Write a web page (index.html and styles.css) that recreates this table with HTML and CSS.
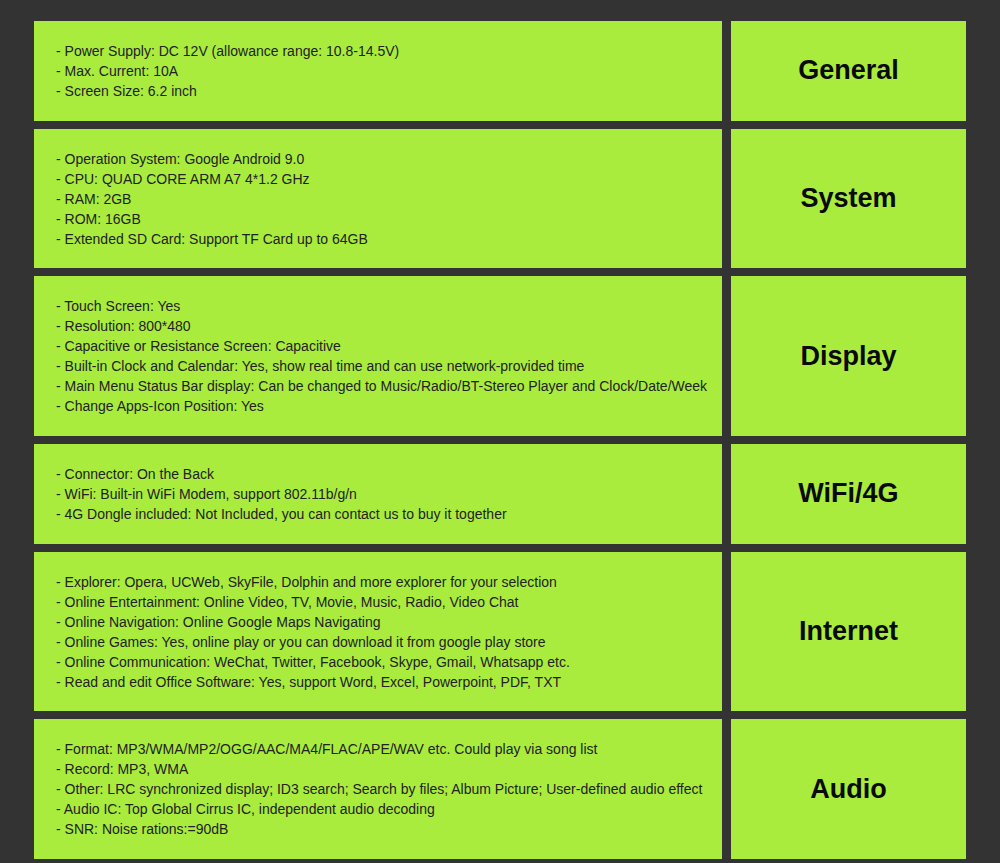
FILE: index.html
```html
<!DOCTYPE html>
<html>
<head>
<meta charset="utf-8">
<link rel="stylesheet" href="styles.css">
</head>
<body>
<div class="specs">
  <div class="cell desc">
    <p>- Power Supply: DC 12V (allowance range: 10.8-14.5V)</p>
    <p>- Max. Current: 10A</p>
    <p>- Screen Size: 6.2 inch</p>
  </div>
  <div class="cell title">General</div>

  <div class="cell desc">
    <p>- Operation System: Google Android 9.0</p>
    <p>- CPU: QUAD CORE ARM A7 4*1.2 GHz</p>
    <p>- RAM: 2GB</p>
    <p>- ROM: 16GB</p>
    <p>- Extended SD Card: Support TF Card up to 64GB</p>
  </div>
  <div class="cell title">System</div>

  <div class="cell desc">
    <p>- Touch Screen: Yes</p>
    <p>- Resolution: 800*480</p>
    <p>- Capacitive or Resistance Screen: Capacitive</p>
    <p>- Built-in Clock and Calendar: Yes, show real time and can use network-provided time</p>
    <p>- Main Menu Status Bar display: Can be changed to Music/Radio/BT-Stereo Player and Clock/Date/Week</p>
    <p>- Change Apps-Icon Position: Yes</p>
  </div>
  <div class="cell title">Display</div>

  <div class="cell desc">
    <p>- Connector: On the Back</p>
    <p>- WiFi: Built-in WiFi Modem, support 802.11b/g/n</p>
    <p>- 4G Dongle included: Not Included, you can contact us to buy it together</p>
  </div>
  <div class="cell title">WiFi/4G</div>

  <div class="cell desc">
    <p>- Explorer: Opera, UCWeb, SkyFile, Dolphin and more explorer for your selection</p>
    <p>- Online Entertainment: Online Video, TV, Movie, Music, Radio, Video Chat</p>
    <p>- Online Navigation: Online Google Maps Navigating</p>
    <p>- Online Games: Yes, online play or you can download it from google play store</p>
    <p>- Online Communication: WeChat, Twitter, Facebook, Skype, Gmail, Whatsapp etc.</p>
    <p>- Read and edit Office Software: Yes, support Word, Excel, Powerpoint, PDF, TXT</p>
  </div>
  <div class="cell title">Internet</div>

  <div class="cell desc">
    <p>- Format: MP3/WMA/MP2/OGG/AAC/MA4/FLAC/APE/WAV etc. Could play via song list</p>
    <p>- Record: MP3, WMA</p>
    <p>- Other: LRC synchronized display; ID3 search; Search by files; Album Picture; User-defined audio effect</p>
    <p>- Audio IC: Top Global Cirrus IC, independent audio decoding</p>
    <p>- SNR: Noise rations:=90dB</p>
  </div>
  <div class="cell title">Audio</div>
</div>
</body>
</html>
```

FILE: styles.css
```css
html, body {
  margin: 0;
  padding: 0;
  background: #333333;
}

body {
  font-family: "Liberation Sans", Arial, sans-serif;
}

.specs {
  display: grid;
  grid-template-columns: 688px 235px;
  column-gap: 9px;
  row-gap: 8px;
  padding: 21px 34px 4px 34px;
}

.cell {
  background: #a9ec3d;
}

.desc {
  padding: 20px 10px 19.67px 22px;
  font-size: 14px;
  line-height: 20px;
  color: #222222;
}

.desc p {
  margin: 0;
  white-space: nowrap;
}

.title {
  display: flex;
  align-items: center;
  justify-content: center;
  font-size: 27px;
  font-weight: bold;
  color: #0a0a0a;
}
```
